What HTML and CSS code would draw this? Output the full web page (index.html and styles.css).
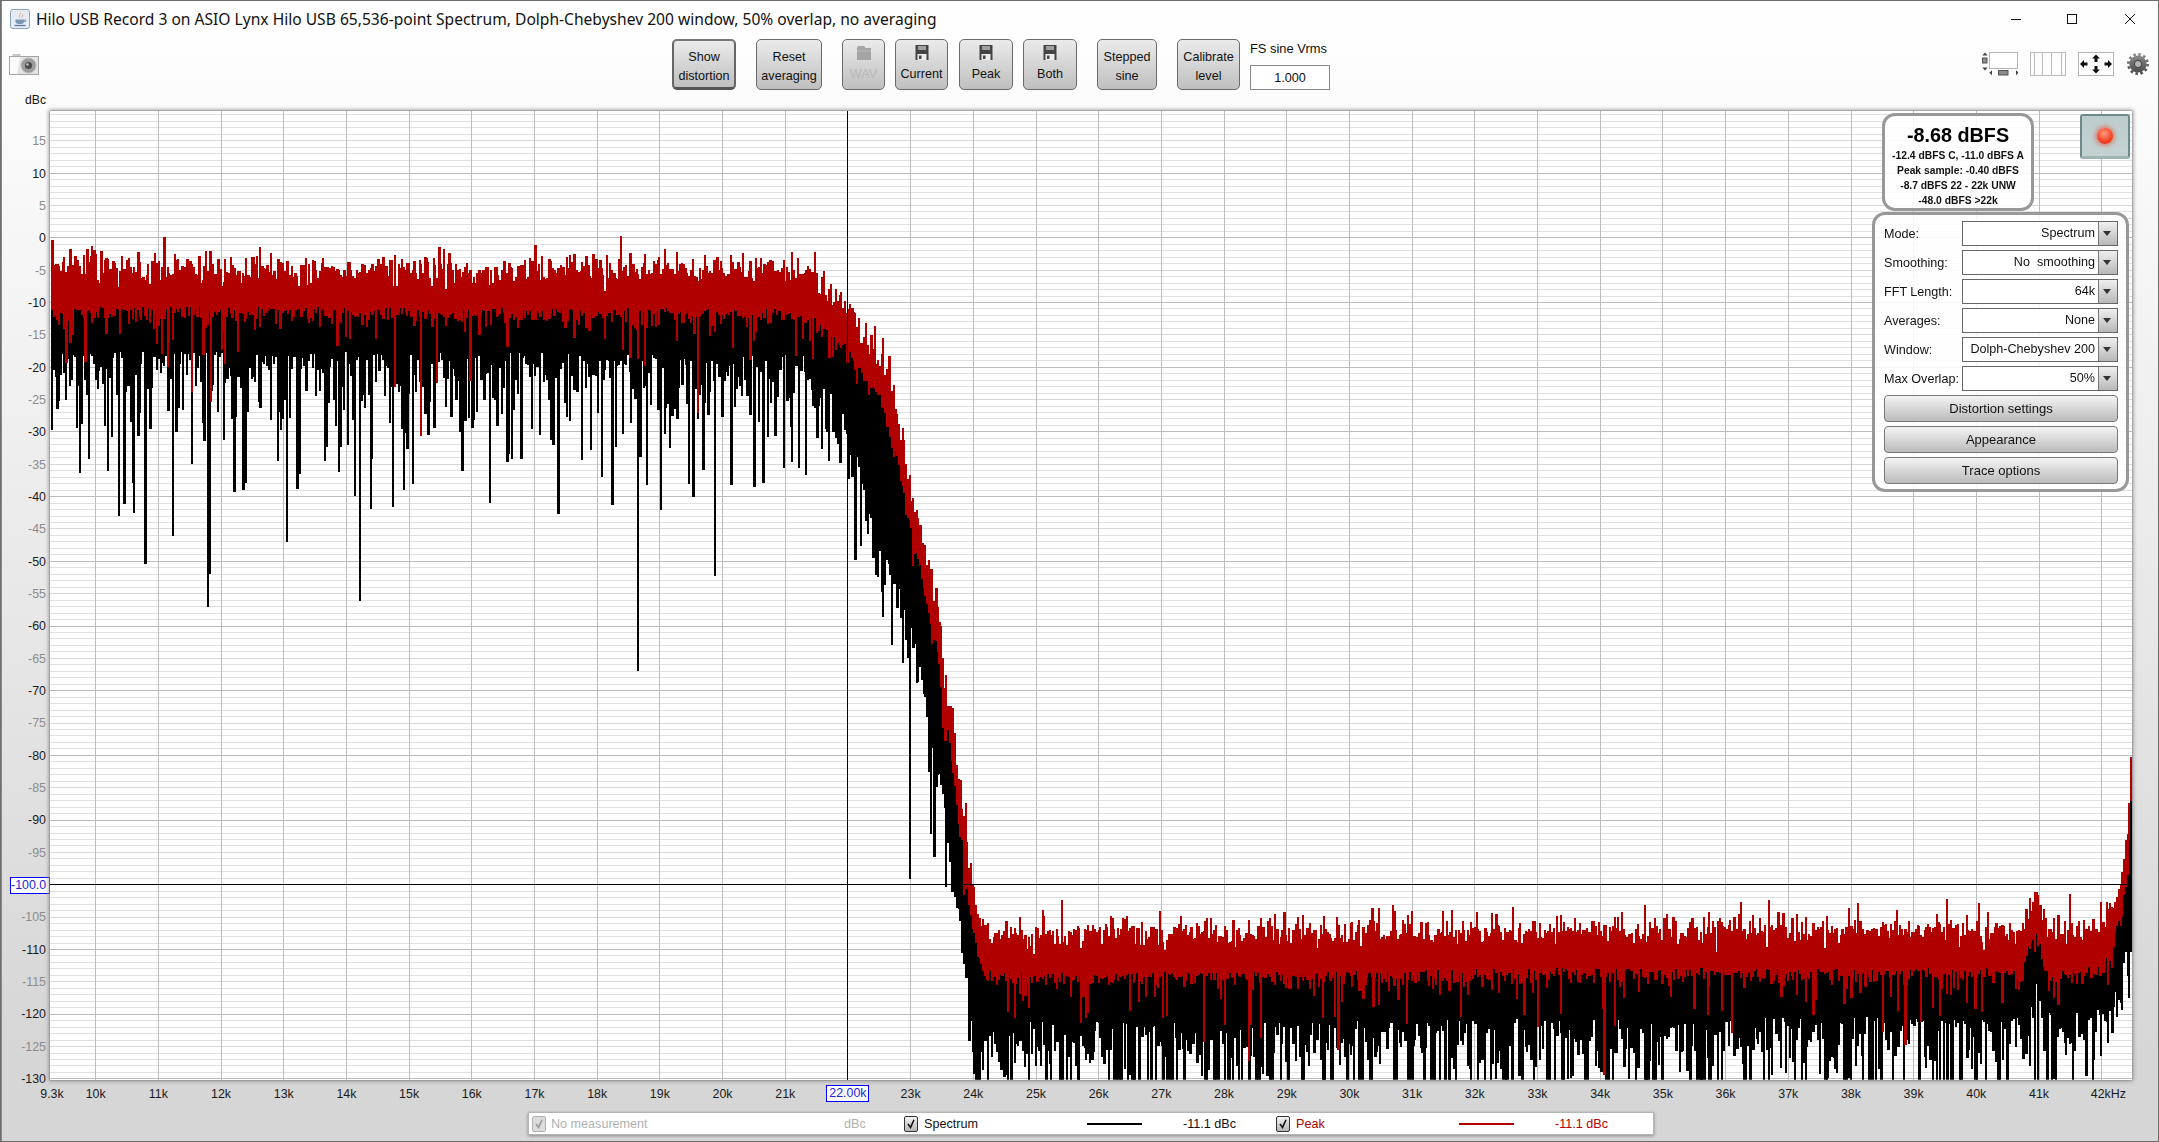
FILE: index.html
```html
<!DOCTYPE html>
<html lang="en">
<head>
<meta charset="utf-8">
<title>Hilo USB Record 3</title>
<link rel="stylesheet" href="styles.css">
</head>
<body>
<div class="window">
  <header class="titlebar">
    <svg class="app-icon" viewBox="0 0 20 20"><rect x=".5" y=".5" width="19" height="19" rx="2.500" fill="#e4ebf3" stroke="#8aa3bd"/><path d="M10.500 2.500c2 2.500-2.500 3 -.5 6.500c-3-2.500 1.500-3.500.5-6.500zM13 5c1 1.500-1.500 2-.5 4c-2-1.500.5-2.500.5-4z" fill="#e07a2a"/><path d="M5.500 10.500h8.500v2.200c0 1.500-1.500 2.300-4.200 2.300s-4.300-.8-4.300-2.300z" fill="#7d97b3"/><path d="M14 11h1.700v1.500h-1.700" fill="none" stroke="#7d97b3"/><path d="M4.500 16.500h11" stroke="#5d7896" stroke-width="1.300"/></svg>
    <span class="title-text">Hilo USB Record 3 on ASIO Lynx Hilo USB 65,536-point Spectrum, Dolph-Chebyshev 200 window, 50% overlap, no averaging</span>
    <div class="win-controls">
      <svg class="win-min" viewBox="0 0 10 10"><path d="M0 5.500h10" stroke="#111"/></svg>
      <svg class="win-max" viewBox="0 0 10 10"><rect x=".5" y=".5" width="9" height="9" fill="none" stroke="#111"/></svg>
      <svg class="win-close" viewBox="0 0 10 10"><path d="M0 0l10 10M10 0L0 10" stroke="#111" fill="none"/></svg>
    </div>
  </header>

  <div class="toolbar">
    <svg class="camera" viewBox="0 0 30 21"><rect x="4" y="0" width="7" height="3" fill="#ccc" stroke="#aaa" stroke-width=".5"/><rect x=".5" y="2.500" width="29" height="18" fill="#e4e4e4" stroke="#a4a4a4"/><path d="M1 3h10l-3 17H1z" fill="#fbfbfb"/><circle cx="19.500" cy="11.500" r="7.500" fill="#9a9a9a"/><circle cx="19.500" cy="11.500" r="7.500" fill="none" stroke="#bbb"/><circle cx="19.500" cy="11.500" r="3.500" fill="#4a4a4a"/><circle cx="18.500" cy="10.500" r="1.200" fill="#c8c8c8"/></svg>
    <button class="tool tool-text tool-selected w-show">Show<br>distortion</button>
    <button class="tool tool-text w-reset">Reset<br>averaging</button>
    <button class="tool tool-disabled w-wav">
      <svg class="tool-icon" viewBox="0 0 16 15"><path d="M1 3l1-2h6l1.500 2H15v12H1z" fill="#a4a4a4"/><path d="M1 6h14" stroke="#b8b8b8"/></svg>
      <span>WAV</span>
    </button>
    <button class="tool w-current">
      <svg class="tool-icon" viewBox="0 0 16 15"><path d="M1.500 0h13v15h-13z" fill="#444"/><rect x="4" y="1" width="8" height="4" fill="#a0a0a0"/><rect x="3.500" y="9" width="9" height="6" fill="#eee"/><rect x="5" y="10.500" width="2.500" height="3.500" fill="#444"/></svg>
      <span>Current</span>
    </button>
    <button class="tool w-peak">
      <svg class="tool-icon" viewBox="0 0 16 15"><path d="M1.500 0h13v15h-13z" fill="#444"/><rect x="4" y="1" width="8" height="4" fill="#a0a0a0"/><rect x="3.500" y="9" width="9" height="6" fill="#eee"/><rect x="5" y="10.500" width="2.500" height="3.500" fill="#444"/></svg>
      <span>Peak</span>
    </button>
    <button class="tool w-both">
      <svg class="tool-icon" viewBox="0 0 16 15"><path d="M1.500 0h13v15h-13z" fill="#444"/><rect x="4" y="1" width="8" height="4" fill="#a0a0a0"/><rect x="3.500" y="9" width="9" height="6" fill="#eee"/><rect x="5" y="10.500" width="2.500" height="3.500" fill="#444"/></svg>
      <span>Both</span>
    </button>
    <button class="tool tool-text w-stepped">Stepped<br>sine</button>
    <button class="tool tool-text w-calibrate">Calibrate<br>level</button>
    <div class="fs-field">
      <span class="fs-label">FS sine Vrms</span>
      <span class="fs-input">1.000</span>
    </div>
    <svg class="view-icon first" viewBox="0 0 36 24"><rect x="7.500" y=".5" width="28" height="16" fill="#fff" stroke="#b4b4b4"/><path d="M3 .5l2.700 3H.3zM3 18.500l2.700-3H.3z" fill="#444"/><rect x=".5" y="6" width="4.500" height="5" fill="#8c8c8c" stroke="#555"/><path d="M10 18.500v5l-2.700-2.500zM34 18.500v5l2.700-2.500z" transform="translate(0 -.3)" fill="#444"/><rect x="16.500" y="18.500" width="9.500" height="4.500" fill="#8c8c8c" stroke="#555"/></svg>
    <svg class="view-icon" viewBox="0 0 36 24"><rect x=".5" y=".5" width="35" height="23" fill="none" stroke="#bbb"/><path d="M4.500 0v24M12.500 0v24M21.500 0v24M31.500 0v24" stroke="#bbb"/></svg>
    <svg class="view-icon" viewBox="0 0 36 24"><rect x=".5" y=".5" width="35" height="23" fill="#fff" stroke="#b4b4b4"/><path d="M18 2.500l4 4h-2.500v3.500h-3V6.500H14zM18 21.500l4-4h-2.500V14h-3v3.500H14zM2 12l4-4v2.500h3.500v3H6V16zM34 12l-4-4v2.500h-3.500v3H30V16z" fill="#111"/></svg>
    <svg class="gear" viewBox="0 0 22 22"><defs><linearGradient id="gearFill" x1="0" y1="0" x2="0" y2="1"><stop offset="0" stop-color="#8a8a8a"/><stop offset="1" stop-color="#4a4a4a"/></linearGradient></defs><circle cx="11" cy="11" r="9.600" fill="none" stroke="url(#gearFill)" stroke-width="2.800" stroke-dasharray="2.500 2.530"/><circle cx="11" cy="11" r="8.600" fill="url(#gearFill)"/><circle cx="11" cy="11" r="3.600" fill="#b4b4b4" stroke="#3c3c3c"/></svg>
  </div>

  <div class="unit-row">dBc</div>

  <div class="plot-row">
    <div class="y-axis">
      <span class="y-tick minor">15</span><span class="y-tick">10</span><span class="y-tick minor">5</span><span class="y-tick">0</span>
      <span class="y-tick minor">-5</span><span class="y-tick">-10</span><span class="y-tick minor">-15</span><span class="y-tick">-20</span>
      <span class="y-tick minor">-25</span><span class="y-tick">-30</span><span class="y-tick minor">-35</span><span class="y-tick">-40</span>
      <span class="y-tick minor">-45</span><span class="y-tick">-50</span><span class="y-tick minor">-55</span><span class="y-tick">-60</span>
      <span class="y-tick minor">-65</span><span class="y-tick">-70</span><span class="y-tick minor">-75</span><span class="y-tick">-80</span>
      <span class="y-tick minor">-85</span><span class="y-tick">-90</span><span class="y-tick minor">-95</span>
      <span class="y-tick"><span class="y-cursor">-100.0</span></span>
      <span class="y-tick minor">-105</span><span class="y-tick">-110</span><span class="y-tick minor">-115</span><span class="y-tick">-120</span>
      <span class="y-tick minor">-125</span><span class="y-tick">-130</span>
    </div>
    <div class="plot">
      <canvas id="chart" width="2082" height="969"></canvas>
      <div class="level-box">
        <div class="level-main">-8.68 dBFS</div>
        <div class="level-line">-12.4 dBFS C, -11.0 dBFS A</div>
        <div class="level-line">Peak sample: -0.40 dBFS</div>
        <div class="level-line">-8.7 dBFS 22 - 22k UNW</div>
        <div class="level-line">-48.0 dBFS &gt;22k</div>
      </div>
      <div class="rec-button"><span class="rec-led"></span></div>
      <div class="settings">
        <div class="set-row"><span class="set-label">Mode:</span><span class="combo"><span class="combo-value">Spectrum</span><span class="combo-arrow"></span></span></div>
        <div class="set-row"><span class="set-label">Smoothing:</span><span class="combo"><span class="combo-value">No&nbsp; smoothing</span><span class="combo-arrow"></span></span></div>
        <div class="set-row"><span class="set-label">FFT Length:</span><span class="combo"><span class="combo-value">64k</span><span class="combo-arrow"></span></span></div>
        <div class="set-row"><span class="set-label">Averages:</span><span class="combo"><span class="combo-value">None</span><span class="combo-arrow"></span></span></div>
        <div class="set-row"><span class="set-label">Window:</span><span class="combo"><span class="combo-value">Dolph-Chebyshev 200</span><span class="combo-arrow"></span></span></div>
        <div class="set-row"><span class="set-label">Max Overlap:</span><span class="combo"><span class="combo-value">50%</span><span class="combo-arrow"></span></span></div>
        <button class="set-button">Distortion settings</button>
        <button class="set-button">Appearance</button>
        <button class="set-button">Trace options</button>
      </div>
    </div>
  </div>

  <div class="x-axis">
    <span class="x-tick x-first">9.3k</span>
    <span class="x-tick">10k</span><span class="x-tick">11k</span><span class="x-tick">12k</span><span class="x-tick">13k</span><span class="x-tick">14k</span><span class="x-tick">15k</span><span class="x-tick">16k</span><span class="x-tick">17k</span><span class="x-tick">18k</span><span class="x-tick">19k</span><span class="x-tick">20k</span><span class="x-tick">21k</span>
    <span class="x-tick"><span class="x-cursor">22.00k</span></span>
    <span class="x-tick">23k</span><span class="x-tick">24k</span><span class="x-tick">25k</span><span class="x-tick">26k</span><span class="x-tick">27k</span><span class="x-tick">28k</span><span class="x-tick">29k</span><span class="x-tick">30k</span><span class="x-tick">31k</span><span class="x-tick">32k</span><span class="x-tick">33k</span><span class="x-tick">34k</span><span class="x-tick">35k</span><span class="x-tick">36k</span><span class="x-tick">37k</span><span class="x-tick">38k</span><span class="x-tick">39k</span><span class="x-tick">40k</span><span class="x-tick">41k</span>
    <span class="x-tick x-last">42kHz</span>
  </div>

  <div class="legend">
    <span class="check check-off"><svg viewBox="0 0 14 16"><path d="M3.500 8l3 4 4-9" fill="none" stroke="#999" stroke-width="1.800"/></svg></span>
    <span class="lg-name lg-off">No measurement</span>
    <span class="lg-unit lg-off">dBc</span>
    <span class="check"><svg viewBox="0 0 14 16"><path d="M3.500 8l3 4 4-9" fill="none" stroke="#111" stroke-width="1.800"/></svg></span>
    <span class="lg-trace">Spectrum</span>
    <span class="lg-line"></span>
    <span class="lg-value">-11.1 dBc</span>
    <span class="check"><svg viewBox="0 0 14 16"><path d="M3.500 8l3 4 4-9" fill="none" stroke="#111" stroke-width="1.800"/></svg></span>
    <span class="lg-trace lg-red">Peak</span>
    <span class="lg-line lg-line-red"></span>
    <span class="lg-value lg-red lg-value-last">-11.1 dBc</span>
  </div>
</div>
<script src="app.js"></script>
</body>
</html>
```
FILE: styles.css
```css
* { box-sizing: border-box; }
html, body { margin: 0; padding: 0; }
body {
  width: 2159px; height: 1142px; overflow: hidden;
  font-family: "Liberation Sans", Arial, sans-serif;
  font-size: 12.6px; color: #111;
}
.window {
  width: 2159px; height: 1142px;
  border: 1px solid #6e6e6e;
  display: flex; flex-direction: column;
  background: linear-gradient(#fefefe 40px, #f4f4f4 300px, #d6d6d6 1050px);
  box-shadow: inset 1px 0 0 #8a8a8a;
  overflow: hidden;
}

/* title bar */
.titlebar { height: 35px; flex: none; display: flex; align-items: center; padding-left: 9px; }
.app-icon { width: 20px; height: 20px; flex: none; }
.title-text { margin-left: 6px; font-family: "Noto Sans", sans-serif; font-size: 15.6px; color: #111; white-space: nowrap; }
.win-controls { margin-left: auto; display: flex; align-items: center; padding-right: 23px; }
.win-controls svg { width: 10px; height: 10px; display: block; }
.win-min { margin-right: 46px; }
.win-max { margin-right: 48px; }

/* tool bar */
.toolbar { height: 57px; flex: none; display: flex; align-items: flex-start; padding: 3px 0 0 8px; }
.camera { width: 30px; height: 21px; margin-top: 15px; flex: none; }
.tool {
  height: 51px; flex: none; padding: 0 0 1px; margin: 0 0 0 20px;
  font: inherit; color: #111; line-height: 19px;
  border: 1px solid #6a6a6a; border-radius: 5px;
  background: linear-gradient(#ebebeb, #bfbfbf);
  text-align: center; display: block;
}
.tool-text { padding: 5px 0 0; }
.tool-selected { border-width: 2px 2px 3px 2px; border-color: #777 #666 #555 #666; }
.tool-disabled { color: #b8b8b8; }
.tool-icon { width: 16px; height: 15px; display: block; margin: 0 auto 5px; }
.w-show { width: 64px; margin-left: 633px; }
.w-reset { width: 66px; }
.w-wav { width: 43px; }
.w-current { width: 53px; margin-left: 10px; }
.w-peak { width: 54px; margin-left: 11px; }
.w-both { width: 54px; margin-left: 10px; }
.w-stepped { width: 60px; }
.w-calibrate { width: 63px; }
.fs-field { width: 80px; margin-left: 10px; flex: none; display: flex; flex-direction: column; }
.fs-label { height: 18px; line-height: 20px; margin-bottom: 8px; white-space: nowrap; font-size: 12.9px; }
.fs-input { height: 25px; border: 1px solid #888; background: #fff; text-align: center; line-height: 24px; }
.view-icon { width: 36px; height: 24px; margin: 13px 0 0 12px; flex: none; }
.view-icon.first { margin-left: auto; }
.gear { width: 22px; height: 22px; margin: 14px 9px 0 13px; flex: none; }

.unit-row { height: 18px; flex: none; width: 45px; text-align: right; font-size: 12.2px; line-height: 14px; }

/* plot */
.plot-row { height: 969px; flex: none; display: flex; }
.y-axis { width: 49px; flex: none; display: flex; flex-direction: column; padding-top: 14px; }
.y-tick {
  height: 32.35px; flex: none; display: flex; align-items: center; justify-content: flex-end;
  padding-right: 4px; font-size: 12.4px; color: #1a1a1a;
}
.y-tick.minor { color: #8c8c8c; }
.y-cursor {
  width: 40px; height: 17px; margin-right: -4px; flex: none;
  border: 1px solid #0000ff; color: #2222dd; background: #fff;
  text-align: right; padding-right: 3px; line-height: 15px;
}
.plot {
  position: relative; width: 2082px; height: 969px; flex: none;
  background: #fff;
  box-shadow: 0 0 1px #666, 0 0 4px 1px #8c8c8c;
}
#chart { display: block; }

.level-box {
  position: absolute; left: 1832px; top: 2px; width: 152px; height: 98px;
  border: 3px solid #989898; border-radius: 13px;
  background: rgba(255,255,255,.86);
  text-align: center; font-weight: bold;
}
.level-main { font-size: 19.8px; line-height: 22px; margin-top: 8px; margin-bottom: 2px; color: #000; }
.level-line { font-size: 10.3px; line-height: 15px; color: #111; }

.rec-button {
  position: absolute; left: 2030px; top: 3px; width: 50px; height: 45px;
  border: 2px solid #6f8a8a; border-bottom: 3px solid #9fb4b4; border-radius: 3px;
  background: linear-gradient(#bdcccc, #c4d2d2);
  display: flex; align-items: center; justify-content: center;
}
.rec-led {
  width: 16px; height: 16px; border-radius: 50%;
  background: radial-gradient(circle at 45% 35%, #ff9a80, #f53a1c 65%, #c9321c);
  box-shadow: 0 0 4px 2px rgba(230,70,40,.55);
}

.settings {
  position: absolute; left: 1822px; top: 101px; width: 257px; height: 280px;
  border: 3px solid #989898; border-radius: 13px;
  background: rgba(255,255,255,.86);
  padding: 6px 8px 0 9px;
  display: flex; flex-direction: column; gap: 4px;
}
.set-row { height: 25px; flex: none; display: flex; align-items: center; }
.set-label { width: 78px; flex: none; white-space: nowrap; }
.combo { width: 156px; height: 25px; flex: none; display: flex; border: 1px solid #666; background: #fff; }
.combo-value { flex: 1; text-align: right; padding-right: 3px; line-height: 23px; white-space: nowrap; }
.combo-arrow {
  width: 19px; flex: none; border-left: 1px solid #777;
  background: linear-gradient(#efefef, #b8b8b8);
  position: relative;
}
.combo-arrow::after {
  content: ""; position: absolute; left: 4px; top: 9px;
  border-left: 4.5px solid transparent; border-right: 4.5px solid transparent; border-top: 5px solid #333;
}
.set-button {
  height: 27px; flex: none; padding: 0; font: inherit; font-size: 13px; color: #111;
  border: 1px solid #777; border-radius: 4px;
  background: linear-gradient(#f4f4f4, #bbb);
}

/* x axis */
.x-axis { height: 32px; flex: none; display: flex; padding: 5px 0 0 38.65px; }
.x-tick {
  width: 62.69px; height: 17px; flex: none; display: flex; align-items: center; justify-content: center;
  font-size: 12.4px; color: #1a1a1a; white-space: nowrap;
}
.x-first { width: 24.7px; }
.x-cursor {
  width: 43px; height: 17px; flex: none;
  border: 1px solid #0000ff; color: #2222dd; background: #fff;
  text-align: center; line-height: 15px;
}
.x-last { width: 60px; margin-left: 20.5px; justify-content: flex-start; }

/* legend */
.legend {
  width: 1126px; height: 23px; flex: none; margin-left: 527px;
  display: flex; align-items: center; padding-left: 3px;
  background: #fff; border: 1px solid #b4b4b4;
  box-shadow: 0 1px 3px #888;
  font-size: 12.6px;
}
.check {
  width: 14px; height: 16px; flex: none; border: 1px solid #333; border-radius: 2px;
  background: linear-gradient(#f4f4f4, #b4b4b4);
  display: block;
}
.check svg { display: block; width: 12px; height: 14px; }
.check-off { border-color: #b0b0b0; background: #dcdcdc; }
.lg-name { width: 293px; margin-left: 5px; flex: none; }
.lg-off { color: #b0b0b0; }
.lg-unit { width: 60px; flex: none; }
.lg-trace { width: 163px; margin-left: 6px; flex: none; }
.lg-line { width: 55px; height: 2px; background: #000; flex: none; }
.lg-line-red { background: #b00000; }
.lg-value { width: 93px; margin-left: 41px; flex: none; white-space: nowrap; }
.lg-value-last { width: 70px; }
.lg-red { color: #b00000; }
```
FILE: app.js
```js
(function () {
  var canvas = document.getElementById('chart');
  var ctx = canvas.getContext('2d');
  var W = canvas.width, H = canvas.height;
  var OX = 50, OY = 111;

  var seed = 20240611;
  function rnd() {
    seed = (seed + 0x6D2B79F5) | 0;
    var t = Math.imul(seed ^ (seed >>> 15), 1 | seed);
    t = (t + Math.imul(t ^ (t >>> 7), 61 | t)) ^ t;
    return ((t ^ (t >>> 14)) >>> 0) / 4294967296;
  }
  function gauss() { return Math.sqrt(-2 * Math.log(1 - rnd())) * Math.cos(6.2832 * rnd()); }
  function expo(m) { return -Math.log(1 - rnd()) * m; }

  function fx(k) { return 95.7 + (k - 10) * 62.69 - OX; }
  function kx(x) { return 10 + (x + OX - 95.7) / 62.69; }
  function dy(db) { return 237.7 - OY - 6.47 * db; }

  function lerp(table, f) {
    if (f <= table[0][0]) return table[0][1];
    for (var i = 1; i < table.length; i++) {
      if (f <= table[i][0]) {
        var a = table[i - 1], b = table[i];
        return a[1] + (b[1] - a[1]) * (f - a[0]) / (b[0] - a[0]);
      }
    }
    return table[table.length - 1][1];
  }

  var redTop = [[9, -4.6], [21, -5], [21.5, -6.5], [21.9, -10], [22.2, -14], [22.6, -20], [22.97, -37], [23.4, -57],
    [23.63, -74], [23.85, -91], [24, -102], [24.12, -106.5], [24.3, -107.6], [30, -107.4], [33, -106.8], [40.7, -107],
    [40.85, -102], [40.93, -100.5], [41.1, -107], [41.3, -107.5], [42, -106], [42.13, -104], [42.3, -99], [42.4, -92],
    [42.44, -85], [42.47, -72], [42.5, -70]];
  var redWidth = [[9, 6], [21.3, 6], [22, 6], [22.5, 6], [24, 5.5], [24.3, 6], [42, 6], [42.3, 5]];
  var blackBottom = [[9, -17.5], [21.3, -18], [22, -28], [22.5, -47], [23, -59], [23.5, -86], [23.85, -110], [24, -124],
    [24.2, -121], [40.8, -120.5], [41, -113], [41.2, -120.5], [42, -119], [42.2, -116], [42.4, -109], [42.5, -104]];
  var deep = [[133.6, -42.5], [172, -46], [206.6, -57], [208.5, -52], [285, -47], [370, -42], [489, -41], [637.6, -67],
    [107, -36], [118, -43], [245, -38], [412, -38], [600, -37], [688, -38]];

  // grid
  ctx.fillStyle = '#fff';
  ctx.fillRect(0, 0, W, H);
  var db, k, y, x;
  for (db = 19; db >= -130; db--) {
    y = Math.round(dy(db) - 0.4);
    ctx.fillStyle = db % 10 === 0 ? '#bcbcbc' : (db % 5 === 0 ? '#d8d8d8' : '#e0e0e0');
    ctx.fillRect(0, y, W, 1);
  }
  for (k = 10; k <= 42; k++) {
    ctx.fillStyle = '#bcbcbc';
    ctx.fillRect(Math.floor(fx(k)), 0, 1, H);
  }

  // traces: one vertical bar per step, snapped to whole pixels
  var STEP = 1.75;
  var plotBottom = dy(-130) + 1;
  var red = [], black = [];
  for (x = 1; x < W - 1; x += STEP) {
    var f = kx(x);
    var e = lerp(redTop, f);
    var top = e + gauss() * 1.2 + (rnd() < 0.06 ? 1.5 + rnd() * 1.6 : 0);
    var bot = e - lerp(redWidth, f) - Math.abs(gauss()) * 1.3 - (rnd() < 0.18 ? expo(3.2) : 0);
    red.push([Math.round(x), top, bot, 2 + (rnd() < 0.25 ? 1 : 0)]);
    var bb = lerp(blackBottom, f) - expo(f < 21.5 ? 6.5 : (f < 24 ? 5 : 7));
    black.push([Math.round(x), e - 4, bb, 2 + (rnd() < 0.4 ? 1 : 0)]);
  }
  deep.forEach(function (s) {
    var i = Math.round((s[0] - OX - 1) / STEP);
    if (black[i]) { black[i][2] = s[1]; black[i][3] = 2; }
  });
  var peakIdx = Math.round((620 - OX - 1) / STEP);
  red[peakIdx][1] = 0.2;

  function paint(list, colour) {
    ctx.fillStyle = colour;
    list.forEach(function (b) {
      var t = dy(b[1]);
      ctx.fillRect(b[0], Math.round(t), Math.min(b[3], W - b[0]), Math.round(dy(b[2]) - t));
    });
  }
  ctx.save();
  ctx.beginPath();
  ctx.rect(0, 0, W, plotBottom);
  ctx.clip();
  paint(black, '#000');
  paint(red, '#b00000');
  ctx.restore();

  // cursors
  ctx.fillStyle = '#000';
  ctx.fillRect(797, 0, 1, H);
  ctx.fillRect(0, 773, W, 1);
})();
```
